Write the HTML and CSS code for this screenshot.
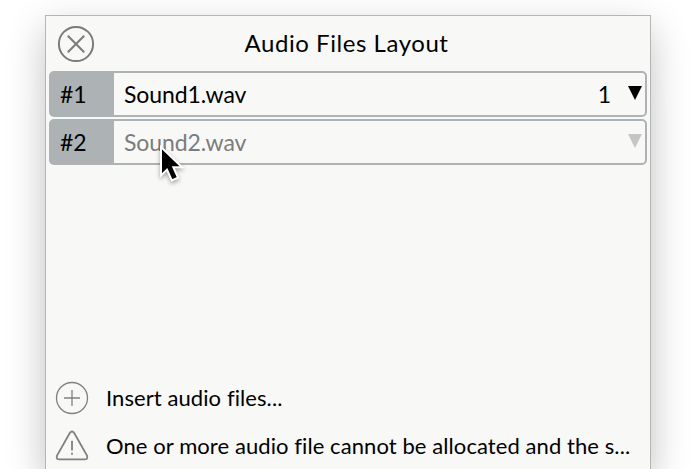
FILE: index.html
```html
<!DOCTYPE html>
<html lang="en">
<head>
<meta charset="utf-8">
<title>Audio Files Layout</title>
<link rel="stylesheet" href="styles.css">
</head>
<body>
<main class="panel">
  <header class="header">
    <svg class="close" viewBox="0 0 38 38"><circle cx="19" cy="19" r="17.1"/><path d="M11.3 11.3l15.4 15.4M26.7 11.3L11.3 26.7"/></svg>
    <h1 class="title">Audio Files Layout</h1>
  </header>
  <section class="list">
    <div class="row">
      <span class="index">#1</span>
      <span class="name">Sound1.wav</span>
      <span class="channel">1</span>
      <svg class="arrow" viewBox="0 0 14 14"><path d="M0 0h14L7 14z"/></svg>
    </div>
    <div class="row disabled">
      <span class="index">#2</span>
      <span class="name">Sound2.wav</span>
      <svg class="arrow" viewBox="0 0 14 14"><path d="M0 0h14L7 14z"/></svg>
    </div>
  </section>
  <footer class="footer">
    <div class="action">
      <svg class="icon plus" viewBox="0 0 34 34"><circle cx="17" cy="17" r="15.5"/><path d="M17 9v16M9 17h16"/></svg>
      <span class="label">Insert audio files...</span>
    </div>
    <div class="action last">
      <svg class="icon warn" viewBox="0 0 34 34"><path d="M14.8 4Q17 1 19.2 4L32 26.6Q33.4 30.4 29.4 30.4H4.6Q.6 30.4 2 26.6Z"/><path d="M17 11.8v9.7M17 23.8v2"/></svg>
      <span class="label">One or more audio file cannot be allocated and the s...</span>
    </div>
  </footer>
</main>
<svg class="cursor" viewBox="0 0 26 38"><path d="M2 2v28.4l6-5.8 4.8 10.8 6.2-2.7-4.7-10.5H23z" fill="#000" stroke="#fff" stroke-width="2"/></svg>
</body>
</html>
```

FILE: styles.css
```css
* { box-sizing: border-box; }
body {
  margin: 0;
  height: 469px;
  padding: 15px 45px 0;
  overflow: hidden;
  background: #fff;
  color: #000;
  font: 23px/28px Lato, "Noto Sans", sans-serif;
}
.panel {
  display: flex;
  flex-direction: column;
  width: 606px;
  height: 454px;
  padding: 0 3px;
  border: 1px solid #b5b5b5;
  border-bottom: 0;
  background: #f8f8f6;
  box-shadow: 0 14px 36px rgba(0, 0, 0, .24), 0 60px 36px rgba(0, 0, 0, .02);
}
.header {
  display: grid;
  grid-template-columns: 38px 1fr 38px;
  align-items: center;
  flex: none;
  height: 55px;
  padding: 1px 8px 0;
}
.close { width: 38px; height: 38px; fill: none; stroke: #7b7b7b; stroke-width: 2; stroke-linecap: round; }
.title { margin: 0; padding: 0 3px 2px 0; font-size: 24px; font-weight: 400; text-align: center; letter-spacing: .55px; white-space: nowrap; }
.list { display: flex; flex: none; flex-direction: column; gap: 2px; height: 303px; }
.row {
  display: flex;
  align-items: center;
  height: 46px;
  padding-right: 3px;
  border: 2px solid #adb3b4;
  border-radius: 5px;
}
.index { align-self: stretch; width: 63px; padding: 7px 0 0 9px; background: #adb3b4; }
.name { flex: 1; padding-left: 10px; letter-spacing: -.1px; }
.channel { margin-right: 17px; }
.arrow { width: 14px; height: 14px; margin-top: -2px; fill: #000; }
.disabled .name { color: #7c7c7b; }
.disabled .arrow { fill: #c5c5c3; }
.footer { display: flex; flex: none; flex-direction: column; }
.action { display: flex; align-items: center; gap: 17px; height: 48px; padding-left: 6px; white-space: nowrap; }
.last { height: 47px; padding-top: 1px; }
.icon { width: 34px; height: 34px; fill: none; stroke: #808080; stroke-width: 1.3; flex: none; }
.warn { stroke-width: 1.8; }
.label { font-size: 22px; letter-spacing: .08px; }
.cursor { position: absolute; left: 159px; top: 145px; width: 26px; height: 38px; filter: drop-shadow(0 2px 2px rgba(0, 0, 0, .35)); }
```
